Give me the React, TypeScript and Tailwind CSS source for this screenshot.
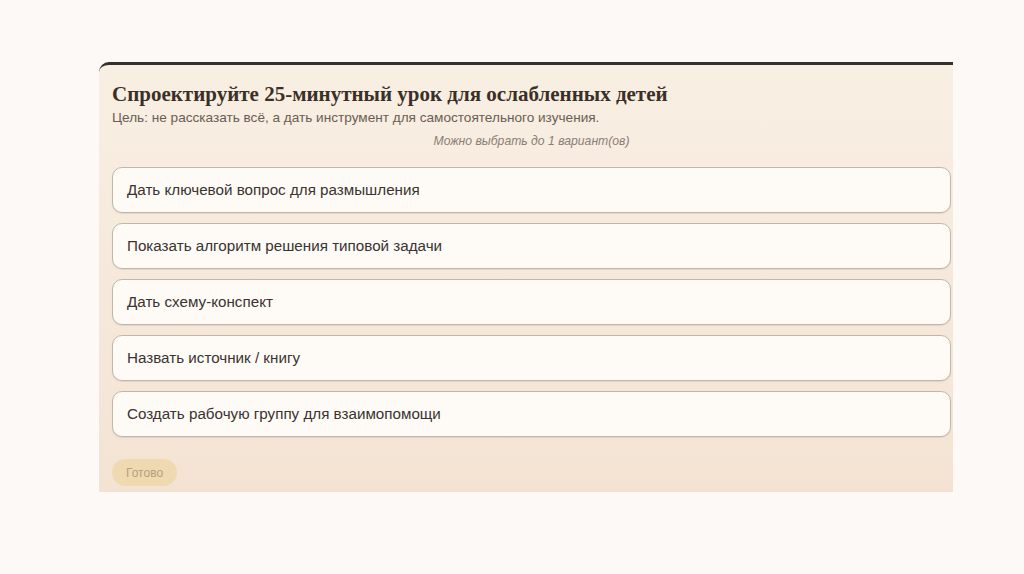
const options = [
  'Дать ключевой вопрос для размышления',
  'Показать алгоритм решения типовой задачи',
  'Дать схему-конспект',
  'Назвать источник / книгу',
  'Создать рабочую группу для взаимопомощи',
];

export default function App() {
  return (
    <div className="w-[1024px] h-[574px] bg-[#fdf9f7] pt-[62px] pl-[99px] font-['Liberation_Sans',sans-serif]">
      <div className="w-[854px] h-[430px] rounded-tl-[10px] border-t-[3px] border-[#35302b] bg-gradient-to-b from-[#f8efe3] to-[#f4e3d3] pl-[13px] pr-[2px] pt-[16px]">
        <h1 className="font-['Liberation_Serif',serif] font-bold text-[21px] leading-[26px] text-[#3a3028]">
          Спроектируйте 25-минутный урок для ослабленных детей
        </h1>
        <p className="mt-[2px] text-[13.6px] leading-[18px] text-[#6a5d54]">
          Цель: не рассказать всё, а дать инструмент для самостоятельного изучения.
        </p>
        <p className="mt-[6px] text-center italic text-[12.2px] leading-[16px] text-[#8a7e76]">
          Можно выбрать до 1 вариант(ов)
        </p>
        <div className="mt-[18px] flex flex-col gap-[10px]">
          {options.map((o) => (
            <div
              key={o}
              className="h-[46px] flex items-center px-[14px] rounded-[10px] border-[1.5px] border-[#c2b6a9] bg-[#fefbf7] text-[15.2px] text-[#3a3330] shadow-[0_1px_1px_rgba(120,100,80,0.15)]"
            >
              {o}
            </div>
          ))}
        </div>
        <button
          type="button"
          className="mt-[22px] h-[27px] px-[14px] rounded-full bg-[#eed9b0] text-[12px] text-[#b3a080]"
        >
          Готово
        </button>
      </div>
    </div>
  );
}
